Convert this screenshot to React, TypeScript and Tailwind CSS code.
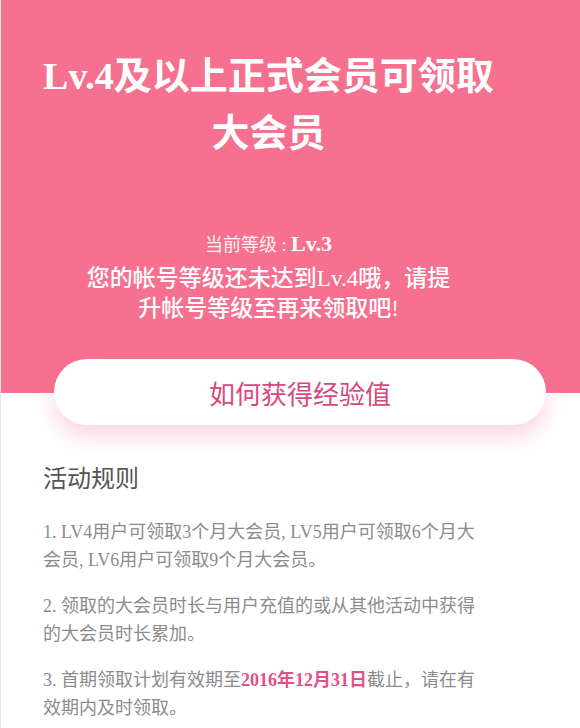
import React from "react";

const FONT = {
  fontFamily: '"Liberation Serif", "Noto Sans CJK SC", sans-serif',
};
const SANS = {
  fontFamily: '"Noto Sans CJK SC", "Liberation Sans", sans-serif',
};

const Rule = ({ children }: { children: React.ReactNode }) => (
  <p className="text-[18px] leading-[28px] text-[#8c8c8c] whitespace-nowrap" style={FONT}>
    {children}
  </p>
);

const App = () => {
  return (
    <div className="w-[580px] h-[728px] bg-white overflow-hidden border-l border-[#e8e8e8]">
      {/* PINK HEADER */}
      <div className="h-[393px] bg-[#f6718f] pl-[20px] pr-[64px] text-white text-center" style={FONT}>
        <h1 className="pt-[48px] text-[38px] leading-[57px] font-bold whitespace-nowrap">
          Lv.4及以上正式会员可领取
          <br />
          大会员
        </h1>

        <p className="mt-[64px] leading-[34px] text-[18px] text-white/90">
          <span style={SANS}>当前等级</span> :{" "}
          <span className="text-[22px] font-bold text-white">Lv.3</span>
        </p>
        <p className="mt-[2px] text-[23px] leading-[30px] font-medium whitespace-nowrap">
          您的帐号等级还未达到Lv.4哦，请提
          <br />
          升帐号等级至再来领取吧!
        </p>
      </div>

      {/* BUTTON */}
      <div className="-mt-[34px] ml-[53px] w-[492px] h-[66px] rounded-full bg-white flex items-center justify-center shadow-[0_12px_22px_rgba(246,113,143,0.28)] relative">
        <span className="text-[26px] text-[#d9487d]" style={SANS}>
          如何获得经验值
        </span>
      </div>

      {/* RULES */}
      <div className="pl-[42px]">
        <h2 className="mt-[36px] text-[24px] leading-[32px] text-[#555]" style={SANS}>
          活动规则
        </h2>

        <div className="mt-[25px] flex flex-col gap-[18px]">
          <Rule>
            1. LV4用户可领取3个月大会员, LV5用户可领取6个月大
            <br />
            会员, LV6用户可领取9个月大会员。
          </Rule>
          <Rule>
            2. 领取的大会员时长与用户充值的或从其他活动中获得
            <br />
            的大会员时长累加。
          </Rule>
          <Rule>
            3. 首期领取计划有效期至
            <span className="text-[#e2508a] font-bold">2016年12月31日</span>
            截止，请在有
            <br />
            效期内及时领取。
          </Rule>
        </div>
      </div>
    </div>
  );
};

export default App;
